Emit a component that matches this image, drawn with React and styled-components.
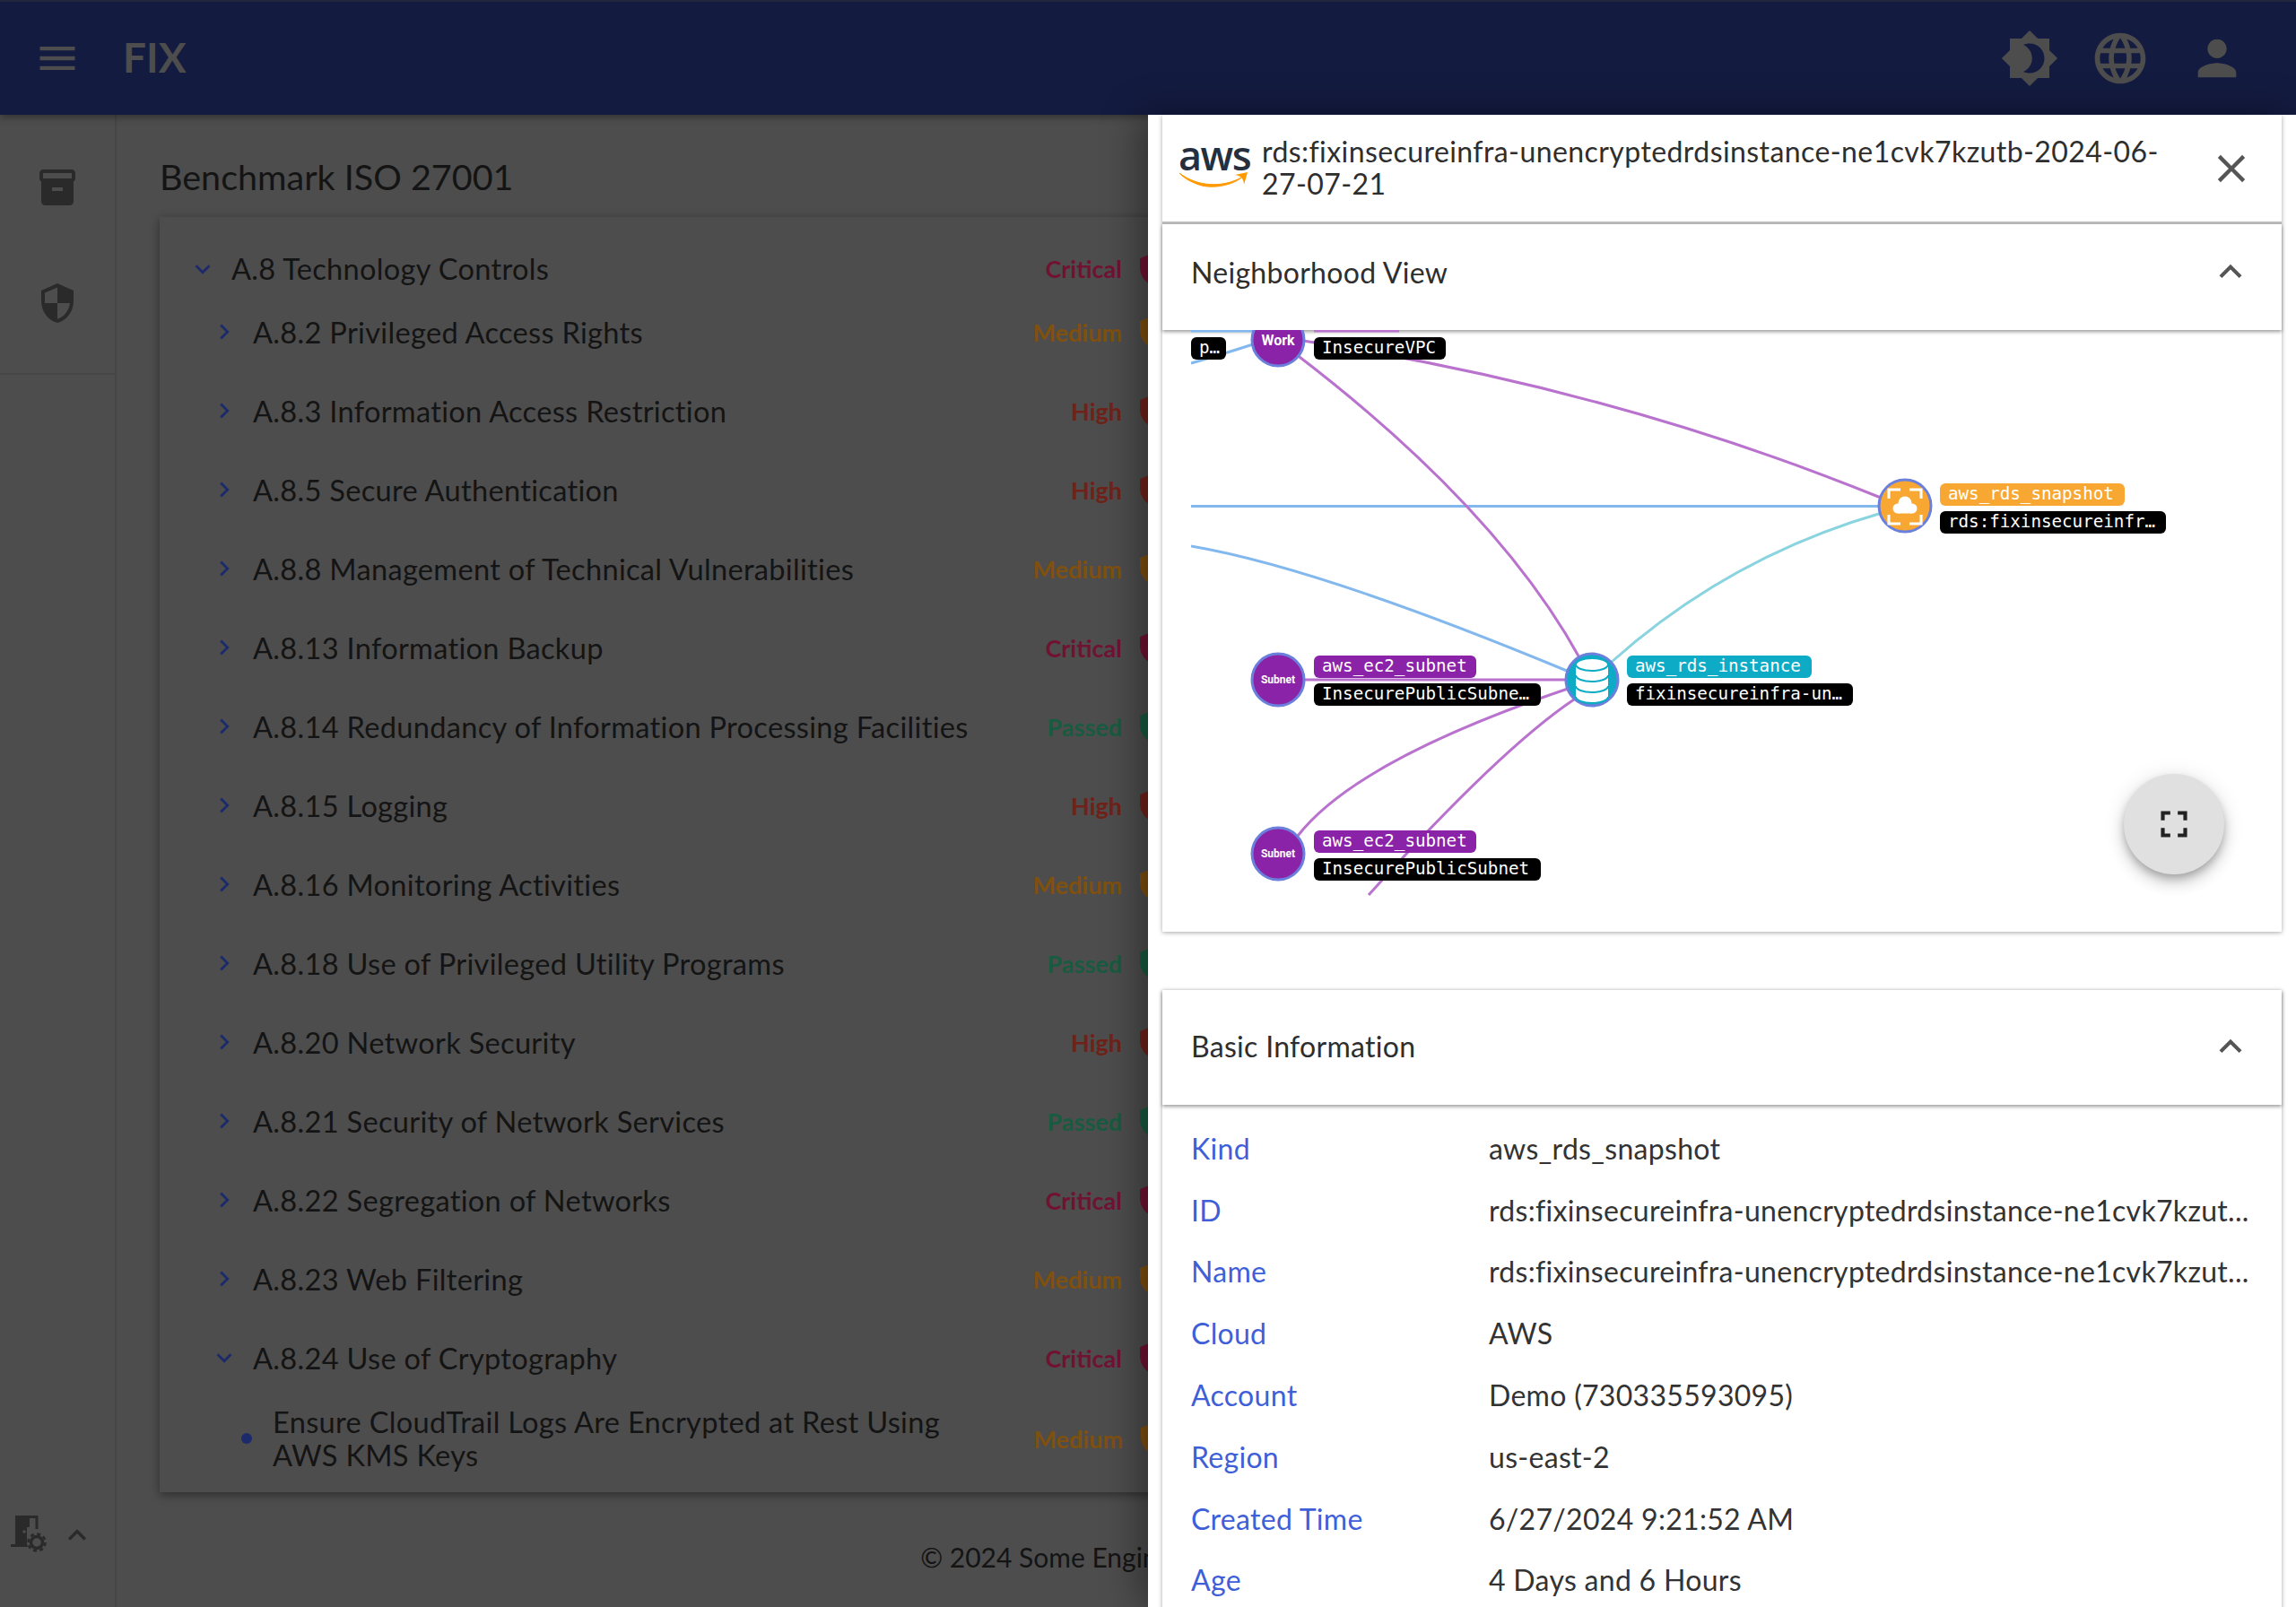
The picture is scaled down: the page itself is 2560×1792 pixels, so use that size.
import React from "react";
import styled, { createGlobalStyle } from "styled-components";

const Global = createGlobalStyle`
  html, body { margin: 0; padding: 0; }
  body {
    width: 2560px;
    height: 1792px;
    overflow: hidden;
    background: #4d4d4d;
    font-family: Lato, "Noto Sans", sans-serif;
  }
`;

const Page = styled.div`
  position: relative;
  width: 2560px;
  height: 1792px;
  overflow: hidden;
  display: flex;
  flex-direction: column;
`;

const AppBar = styled.header`
  height: 128px;
  flex: none;
  background: #131b40;
  border-top: 2px solid #22263d;
  box-sizing: border-box;
  box-shadow: 0 3px 8px rgba(0, 0, 0, 0.35);
  display: flex;
  align-items: center;
  padding: 0 56px 0 38px;
  position: relative;
  z-index: 1;
`;

const Brand = styled.div`
  margin: -4px 0 0 47px;
  color: #4d4d4d;
  font-size: 46px;
  font-weight: 700;
  flex: 1;
`;

const AppBarIcons = styled.div`
  display: flex;
  align-items: center;
  gap: 34px;
`;

const ProfileSlot = styled.span`
  display: flex;
  margin-left: 8px;
`;

const Body = styled.div`
  flex: 1;
  display: flex;
  min-height: 0;
`;

const SideNav = styled.nav`
  width: 130px;
  flex: none;
  box-sizing: border-box;
  border-right: 2px solid #464646;
  display: flex;
  flex-direction: column;
`;

const NavGroup = styled.div`
  height: 290px;
  box-sizing: border-box;
  border-bottom: 2px solid #464646;
  display: flex;
  flex-direction: column;
  align-items: center;
  gap: 81px;
  padding: 57px 0 0;
`;

const NavFooter = styled.div`
  margin-top: auto;
  display: flex;
  align-items: center;
  padding: 0 0 57px 12px;
  gap: 10px;
`;

const Main = styled.main`
  flex: 1;
  display: flex;
  flex-direction: column;
  padding: 39px 0 0 48px;
  min-width: 0;
`;

const Title = styled.h1`
  margin: 0;
  color: #141414;
  font-size: 39.5px;
  line-height: 60px;
  font-weight: 400;
`;

const Card = styled.section`
  margin-top: 15px;
  width: 1400px;
  height: 1422px;
  box-sizing: border-box;
  padding: 31px 0 0;
  background: #4d4d4d;
  box-shadow: 0 3px 10px rgba(0, 0, 0, 0.4);
`;

const Row = styled.div`
  display: flex;
  align-items: center;
  height: ${(p) => p.$h}px;
  padding-left: ${(p) => p.$indent}px;
`;

const RowLabel = styled.div`
  width: ${(p) => p.$w}px;
  margin-left: ${(p) => p.$ml}px;
  flex: none;
  color: #141414;
  font-size: 32.6px;
  letter-spacing: 0.3px;
  line-height: 37px;
  white-space: nowrap;
`;

const Status = styled.div`
  width: 163px;
  flex: none;
  text-align: right;
  color: ${(p) => p.$color};
  font-size: 27px;
  font-weight: 700;
`;

const ShieldSlot = styled.span`
  display: flex;
  margin-left: 15px;
`;

const Bullet = styled.span`
  width: 12px;
  height: 12px;
  border-radius: 50%;
  background: #1c2a6b;
  flex: none;
  margin: 0 23px 0 5px;
`;

const Footer = styled.footer`
  flex: 1;
  display: flex;
  align-items: center;
  justify-content: center;
  color: #141414;
  font-size: 30px;
  padding: 16px 34px 0 0;
`;

const Drawer = styled.aside`
  position: absolute;
  top: 128px;
  right: 0;
  bottom: 0;
  width: 1280px;
  background: #fff;
  box-shadow: -8px 0 40px rgba(0, 0, 0, 0.4);
  z-index: 2;
  padding: 0 16px;
  box-sizing: border-box;
  overflow: hidden;
  color: #2e2e2e;
  letter-spacing: 0.3px;
`;

const Panel = styled.div`
  background: #fff;
  box-shadow: 0 1px 5px rgba(0, 0, 0, 0.35);
`;

const DrawerHead = styled.div`
  height: 122px;
  display: flex;
  align-items: center;
  padding: 0 30px 0 18px;
  border-bottom: 3px solid #bdbdbd;
  box-sizing: border-box;
`;

const Aws = styled.div`
  width: 78px;
  height: 56px;
  flex: none;
  margin: -8px 15px 0 0;
`;

const AwsText = styled.div`
  font-family: "Open Sans", sans-serif;
  font-size: 45px;
  font-weight: 600;
  line-height: 34px;
  letter-spacing: -1.5px;
  color: #252f3e;
  text-align: center;
`;

const DrawerTitle = styled.div`
  flex: 1;
  font-size: 32px;
  letter-spacing: 0.42px;
  line-height: 36px;
  margin-top: -1px;
`;

const SectionHead = styled.div`
  height: ${(p) => p.$h}px;
  padding: 0 32px ${(p) => p.$pb}px 32px;
  display: flex;
  align-items: center;
  justify-content: space-between;
  box-sizing: border-box;
  font-size: 32px;
  color: #2e2e2e;
  position: relative;
  box-shadow: 0 2px 4px rgba(0, 0, 0, 0.4);
`;

const GraphBox = styled.div`
  position: relative;
  height: 671px;
  padding: 0 32px;
  box-sizing: border-box;
`;

const GraphSvg = styled.svg`
  display: block;
`;

const Fab = styled.div`
  position: absolute;
  right: 64px;
  bottom: 64px;
  width: 112px;
  height: 112px;
  border-radius: 50%;
  background: #e0e0e0;
  display: flex;
  align-items: center;
  justify-content: center;
  box-shadow: 0 5px 8px -1px rgba(0, 0, 0, 0.2), 0 10px 16px rgba(0, 0, 0, 0.14), 0 3px 24px rgba(0, 0, 0, 0.12);
`;

const InfoPanel = styled(Panel)`
  margin-top: 65px;
  height: 800px;
`;

const InfoList = styled.dl`
  margin: 0;
  padding: 14px 32px 0;
  display: grid;
  grid-template-columns: 332px 1fr;
  grid-auto-rows: 68.8px;
  align-items: center;
  font-size: 32px;
`;

const InfoKey = styled.dt`
  color: #3f5fd8;
`;

const InfoValue = styled.dd`
  margin: 0;
  color: #333;
  white-space: nowrap;
`;

const GraphText = styled.text`
  font-family: "DejaVu Sans Mono", monospace;
  font-size: 19.2px;
  letter-spacing: 0;
  fill: #fff;
`;

const NodeText = styled.text`
  font-family: Roboto, sans-serif;
  font-weight: 700;
  letter-spacing: 0;
  fill: #fff;
  text-anchor: middle;
`;

function Mui({ d, size = 48, color = "#4d4d4d" }) {
  return (
    <svg width={size} height={size} viewBox="0 0 24 24" fill={color}>
      <path d={d} />
    </svg>
  );
}

const ICONS = {
  menu: "M3 18h18v-2H3v2zm0-5h18v-2H3v2zm0-7v2h18V6H3z",
  inventory: "M20 2H4c-1 0-2 .9-2 2v3.01c0 .72.43 1.34 1 1.69V20c0 1.1 1.1 2 2 2h14c.9 0 2-.9 2-2V8.7c.57-.35 1-.97 1-1.69V4c0-1.1-1-2-2-2zm-5 12H9v-2h6v2zm5-7H4V4l16-.02V7z",
  security: "M12 1 3 5v6c0 5.55 3.84 10.74 9 12 5.16-1.26 9-6.45 9-12V5l-9-4zm0 10.99h7c-.53 4.12-3.28 7.79-7 8.94V12H5V6.3l7-3.11v8.8z",
  brightness: "M20 8.69V4h-4.69L12 .69 8.69 4H4v4.69L.69 12 4 15.31V20h4.69L12 23.31 15.31 20H20v-4.69L23.31 12 20 8.69zM12 18c-.89 0-1.74-.2-2.5-.55C11.56 16.5 13 14.42 13 12s-1.44-4.5-3.5-5.45C10.26 6.2 11.11 6 12 6c3.31 0 6 2.69 6 6s-2.69 6-6 6z",
  language: "M11.99 2C6.47 2 2 6.48 2 12s4.47 10 9.99 10C17.52 22 22 17.52 22 12S17.52 2 11.99 2zm6.93 6h-2.95c-.32-1.25-.78-2.45-1.38-3.56 1.84.63 3.37 1.91 4.33 3.56zM12 4.04c.83 1.2 1.48 2.53 1.91 3.96h-3.82c.43-1.43 1.08-2.76 1.91-3.96zM4.26 14C4.1 13.36 4 12.69 4 12s.1-1.36.26-2h3.38c-.08.66-.14 1.32-.14 2 0 .68.06 1.34.14 2H4.26zm.82 2h2.95c.32 1.25.78 2.45 1.38 3.56-1.84-.63-3.37-1.9-4.33-3.56zm2.95-8H5.08c.96-1.66 2.49-2.93 4.33-3.56C8.81 5.55 8.35 6.75 8.03 8zM12 19.96c-.83-1.2-1.48-2.53-1.91-3.96h3.82c-.43 1.43-1.08 2.76-1.91 3.96zM14.34 14H9.66c-.09-.66-.16-1.32-.16-2 0-.68.07-1.35.16-2h4.68c.09.65.16 1.32.16 2 0 .68-.07 1.34-.16 2zm.25 5.56c.6-1.11 1.06-2.31 1.38-3.56h2.95c-.96 1.65-2.49 2.93-4.33 3.56zM16.36 14c.08-.66.14-1.32.14-2 0-.68-.06-1.34-.14-2h3.38c.16.64.26 1.31.26 2s-.1 1.36-.26 2h-3.38z",
  person: "M12 12c2.21 0 4-1.79 4-4s-1.79-4-4-4-4 1.79-4 4 1.79 4 4 4zm0 2c-2.67 0-8 1.34-8 4v2h16v-2c0-2.66-5.33-4-8-4z",
  close: "M19 6.41 17.59 5 12 10.59 6.41 5 5 6.41 10.59 12 5 17.59 6.41 19 12 13.41 17.59 19 19 17.59 13.41 12z",
  fullscreen: "M7 14H5v5h5v-2H7v-3zm-2-4h2V7h3V5H5v5zm12 7h-3v2h5v-5h-2v3zM14 5v2h3v3h2V5h-5z",
  less: "m12 8-6 6 1.41 1.41L12 10.83l4.59 4.58L18 14z",
  right: "M10 6 8.59 7.41 13.17 12l-4.58 4.59L10 18l6-6z",
  more: "M16.59 8.59 12 13.17 7.41 8.59 6 10l6 6 6-6z",
  shield: "M12 1 3 5v6c0 5.55 3.84 10.74 9 12 5.16-1.26 9-6.45 9-12V5l-9-4z",
};

const SEVERITY = {
  Critical: "#721233",
  High: "#702218",
  Medium: "#80500f",
  Passed: "#175c40",
};

const ROWS = [
  ["A.8.2 Privileged Access Rights", "Medium"],
  ["A.8.3 Information Access Restriction", "High"],
  ["A.8.5 Secure Authentication", "High"],
  ["A.8.8 Management of Technical Vulnerabilities", "Medium"],
  ["A.8.13 Information Backup", "Critical"],
  ["A.8.14 Redundancy of Information Processing Facilities", "Passed"],
  ["A.8.15 Logging", "High"],
  ["A.8.16 Monitoring Activities", "Medium"],
  ["A.8.18 Use of Privileged Utility Programs", "Passed"],
  ["A.8.20 Network Security", "High"],
  ["A.8.21 Security of Network Services", "Passed"],
  ["A.8.22 Segregation of Networks", "Critical"],
  ["A.8.23 Web Filtering", "Medium"],
];

const INFO = [
  ["Kind", "aws_rds_snapshot"],
  ["ID", "rds:fixinsecureinfra-unencryptedrdsinstance-ne1cvk7kzut..."],
  ["Name", "rds:fixinsecureinfra-unencryptedrdsinstance-ne1cvk7kzut..."],
  ["Cloud", "AWS"],
  ["Account", "Demo (730335593095)"],
  ["Region", "us-east-2"],
  ["Created Time", "6/27/2024 9:21:52 AM"],
  ["Age", "4 Days and 6 Hours"],
];

function SeverityCell({ level }) {
  return (
    <>
      <Status $color={SEVERITY[level]}>{level}</Status>
      <ShieldSlot>
        <Mui d={ICONS.shield} size={40} color={SEVERITY[level]} />
      </ShieldSlot>
    </>
  );
}

function Pill({ x, y, w, color = "#000", children }) {
  return (
    <g>
      <rect x={x} y={y} width={w} height={25} rx={6} fill={color} />
      <GraphText x={x + 9} y={y + 18}>{children}</GraphText>
    </g>
  );
}

function Node({ cx, cy, fill, label, size = 12 }) {
  return (
    <g>
      <circle cx={cx} cy={cy} r={29} fill={fill} stroke="#6a80dc" strokeWidth="3" />
      {label && <NodeText x={cx} y={cy + size * 0.36} fontSize={size}>{label}</NodeText>}
    </g>
  );
}

function Graph() {
  return (
    <GraphSvg width="1184" height="632" viewBox="1328 368 1184 632">
      <g fill="none" strokeWidth="3">
        <g stroke="#82b8ee">
          <path d="M1328 369H1400" />
          <path d="M1328 405Q1360 396 1397 384" />
          <path d="M1328 564.5H2096" />
          <path d="M1328 609Q1470 633 1747 748" />
        </g>
        <g stroke="#b973cf">
          <path d="M1465 369H1560" />
          <path d="M1440 378Q1790 430 2097 555" />
          <path d="M1445 395Q1670 567 1762 735" />
          <path d="M1455 758H1746" />
          <path d="M1447 932Q1512 848 1748 768" />
          <path d="M1755 780Q1673 835 1526 998" />
        </g>
        <path d="M1797 738Q1928 621 2098 572" stroke="#8ad4e0" />
      </g>
      <Node cx={1425} cy={379} fill="#8a23a8" label="Work" size={16} />
      <Node cx={1425} cy={758} fill="#8a23a8" label="Subnet" />
      <Node cx={1425} cy={952} fill="#8a23a8" label="Subnet" />
      <Node cx={1775} cy={758} fill="#0eabc6" />
      <g fill="#fff" stroke="#0eabc6" strokeWidth="2">
        <ellipse cx="1775" cy="777" rx="18" ry="7" />
        <path d="M1757 765v12h36v-12z" stroke="none" />
        <ellipse cx="1775" cy="765" rx="18" ry="7" />
        <path d="M1757 753v12h36v-12z" stroke="none" />
        <ellipse cx="1775" cy="753" rx="18" ry="7" />
        <path d="M1757 741v12h36v-12z" stroke="none" />
        <ellipse cx="1775" cy="741" rx="18" ry="7" />
      </g>
      <Node cx={2124} cy={564} fill="#f8a832" />
      <path d="M2106 556v-10h13M2142 556v-10h-13M2106 574v10h13M2142 574v10h-13" fill="none" stroke="#fff" strokeWidth="3" />
      <g fill="#fff">
        <circle cx="2124" cy="561" r="7.5" />
        <circle cx="2116" cy="567" r="5.5" />
        <circle cx="2132" cy="567" r="5.5" />
        <rect x="2116" y="564" width="16" height="8.5" />
      </g>
      <Pill x={1328} y={376} w={39}>p…</Pill>
      <Pill x={1465} y={376} w={147}>InsecureVPC</Pill>
      <Pill x={1465} y={731} w={181} color="#8a23a8">aws_ec2_subnet</Pill>
      <Pill x={1465} y={762} w={253}>InsecurePublicSubne…</Pill>
      <Pill x={1465} y={926} w={181} color="#8a23a8">aws_ec2_subnet</Pill>
      <Pill x={1465} y={957} w={253}>InsecurePublicSubnet</Pill>
      <Pill x={1814} y={731} w={206} color="#0eabc6">aws_rds_instance</Pill>
      <Pill x={1814} y={762} w={252}>fixinsecureinfra-un…</Pill>
      <Pill x={2163} y={539} w={206} color="#f8a832">aws_rds_snapshot</Pill>
      <Pill x={2163} y={570} w={252}>rds:fixinsecureinfr…</Pill>
    </GraphSvg>
  );
}

export default function App() {
  return (
    <Page>
      <Global />
      <AppBar>
        <Mui d={ICONS.menu} size={52} />
        <Brand>FIX</Brand>
        <AppBarIcons>
          <Mui d={ICONS.brightness} size={66} />
          <Mui d={ICONS.language} size={68} />
          <ProfileSlot>
            <Mui d={ICONS.person} size={64} />
          </ProfileSlot>
        </AppBarIcons>
      </AppBar>
      <Body>
        <SideNav>
          <NavGroup>
            <Mui d={ICONS.inventory} size={48} color="#2a2a2a" />
            <Mui d={ICONS.security} size={48} color="#2a2a2a" />
          </NavGroup>
          <NavFooter>
            <svg width="44" height="46" viewBox="0 0 44 46">
              <path d="M5 33V1h16v13h-3v19z" fill="#2a2a2a" />
              <path d="M0 33h19v3H0z" fill="#2a2a2a" />
              <path d="M21 2.5h8V16" fill="none" stroke="#2a2a2a" strokeWidth="3" />
              <circle cx="15" cy="19" r="1.8" fill="#4d4d4d" />
              <circle cx="29" cy="31" r="11" fill="#4d4d4d" />
              <circle cx="29" cy="31" r="6.5" fill="none" stroke="#2a2a2a" strokeWidth="3.5" />
              <circle cx="29" cy="31" r="9.5" fill="none" stroke="#2a2a2a" strokeWidth="2.5" strokeDasharray="4 3.45" />
            </svg>
            <Mui d={ICONS.less} size={40} color="#2a2a2a" />
          </NavFooter>
        </SideNav>
        <Main>
          <Title>Benchmark ISO 27001</Title>
          <Card>
            <Row $indent={31} $h={53}>
              <Mui d={ICONS.more} size={34} color="#1c2a6b" />
              <RowLabel $w={830} $ml={15}>A.8 Technology Controls</RowLabel>
              <SeverityCell level="Critical" />
            </Row>
            {ROWS.map(([label, level]) => (
              <Row key={label} $indent={55} $h={88}>
                <Mui d={ICONS.right} size={34} color="#1c2a6b" />
                <RowLabel $w={806} $ml={15}>{label}</RowLabel>
                <SeverityCell level={level} />
              </Row>
            ))}
            <Row $indent={55} $h={88}>
              <Mui d={ICONS.more} size={34} color="#1c2a6b" />
              <RowLabel $w={806} $ml={15}>A.8.24 Use of Cryptography</RowLabel>
              <SeverityCell level="Critical" />
            </Row>
            <Row $indent={86} $h={92}>
              <Bullet />
              <RowLabel $w={785} $ml={0}>
                Ensure CloudTrail Logs Are Encrypted at Rest Using
                <br />
                AWS KMS Keys
              </RowLabel>
              <SeverityCell level="Medium" />
            </Row>
          </Card>
          <Footer>© 2024 Some Engineering Inc. All rights reserved.</Footer>
        </Main>
      </Body>
      <Drawer>
        <Panel>
          <DrawerHead>
            <Aws>
              <AwsText>aws</AwsText>
              <svg width="78" height="22" viewBox="0 0 78 22">
                <path d="M1 3C22 19 50 19 70 8C64 14 44 21 26 17C16 14 6 9 1 3z" fill="#f90" stroke="#f90" strokeWidth="1" />
                <path d="M63 5L77 2L73 16C73 10 70 6 63 5z" fill="#f90" />
              </svg>
            </Aws>
            <DrawerTitle>
              rds:fixinsecureinfra-unencryptedrdsinstance-ne1cvk7kzutb-2024-06-
              <br />
              27-07-21
            </DrawerTitle>
            <Mui d={ICONS.close} size={52} color="#555" />
          </DrawerHead>
          <SectionHead $h={118} $pb={12}>
            Neighborhood View
            <Mui d={ICONS.less} size={50} color="#555" />
          </SectionHead>
          <GraphBox>
            <Graph />
            <Fab>
              <Mui d={ICONS.fullscreen} size={50} color="#222" />
            </Fab>
          </GraphBox>
        </Panel>
        <InfoPanel>
          <SectionHead $h={128} $pb={3}>
            Basic Information
            <Mui d={ICONS.less} size={50} color="#555" />
          </SectionHead>
          <InfoList>
            {INFO.map(([k, v]) => (
              <React.Fragment key={k}>
                <InfoKey>{k}</InfoKey>
                <InfoValue>{v}</InfoValue>
              </React.Fragment>
            ))}
          </InfoList>
        </InfoPanel>
      </Drawer>
    </Page>
  );
}
